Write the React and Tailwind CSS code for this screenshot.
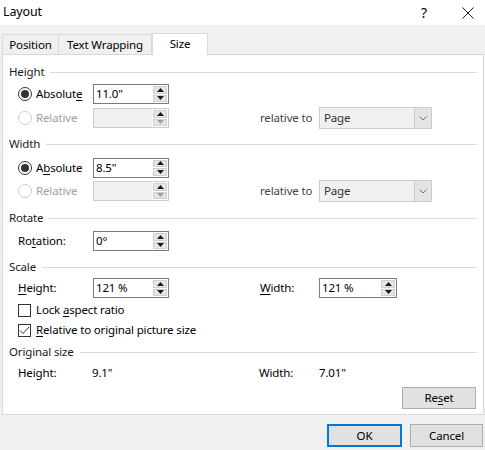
const font = { fontFamily: '"Noto Sans", "Open Sans", sans-serif', letterSpacing: '-0.15px' }

function U({ children }) {
  return <span className="underline underline-offset-2">{children}</span>
}

function Arrow({ up, color }) {
  return (
    <svg width="7" height="4" viewBox="0 0 7 4">
      {up ? <path d="M0 4 L3.5 0 L7 4 Z" fill={color} /> : <path d="M0 0 L3.5 4 L7 0 Z" fill={color} />}
    </svg>
  )
}

function Spin({ value, disabled, w = 'w-[76px]' }) {
  return (
    <div className={`flex h-[20px] ${w} border ${disabled ? 'border-[#cccccc]' : 'border-[#7a7a7a]'}`}>
      <div className={`flex-1 flex items-center pl-[2px] ${disabled ? 'bg-[#f0f0f0]' : 'bg-white'}`}>{value}</div>
      <div className="w-[16px] flex flex-col bg-white p-px gap-px">
        <div className="flex-1 flex items-center justify-center bg-[#e5e5e5] border border-[#d0d0d0]"><Arrow up color="#1a1a1a" /></div>
        <div className="flex-1 flex items-center justify-center bg-[#e5e5e5] border border-[#d0d0d0]"><Arrow color={disabled ? '#a0a0a0' : '#1a1a1a'} /></div>
      </div>
    </div>
  )
}

function Drop() {
  return (
    <div className="flex h-[22px] w-[113px] border border-[#cccccc] bg-[#f0f0f0]">
      <div className="flex-1 flex items-center pl-[4px] text-[#333]">Page</div>
      <div className="w-[17px] flex items-center justify-center bg-[#e4e4e4] border-l border-[#cccccc]">
        <svg width="8" height="5" viewBox="0 0 8 5"><path d="M0.5 0.5 L4 4 L7.5 0.5" fill="none" stroke="#707070" strokeWidth="1" /></svg>
      </div>
    </div>
  )
}

function Radio({ on, disabled }) {
  return (
    <div className={`w-[14px] h-[14px] rounded-full border flex items-center justify-center bg-white ${disabled ? 'border-[#cccccc]' : 'border-[#333]'}`}>
      {on && <div className="w-[8px] h-[8px] rounded-full bg-[#333]" />}
    </div>
  )
}

function Check({ on }) {
  return (
    <div className="w-[13px] h-[13px] border border-[#333] bg-white flex items-center justify-center">
      {on && <svg width="11" height="9" viewBox="0 0 11 9"><path d="M1 4.5 L4 7.5 L10 1" fill="none" stroke="#333" strokeWidth="1" /></svg>}
    </div>
  )
}

function Header({ children, className = '' }) {
  return (
    <div className={`flex items-center h-[20px] ${className}`}>
      <span className="text-[#1a1a1a]">{children}</span>
      <div className="flex-1 ml-[6px] border-t border-[#dcdcdc]" />
    </div>
  )
}

function RadioRow({ on, disabled, label, value, rel, h = 'h-[24px]' }) {
  return (
    <div className={`flex items-center ${h}`}>
      <div className="w-[9px]" />
      <Radio on={on} disabled={disabled} />
      <span className={`ml-[4px] w-[57px] ${disabled ? 'text-[#a0a0a0]' : ''}`}>{label}</span>
      <Spin value={value} disabled={disabled} />
      {rel && (
        <>
          <span className="ml-[91px] w-[59px] text-[#444]">relative to</span>
          <Drop />
        </>
      )}
    </div>
  )
}

export default function App() {
  return (
    <div className="w-[485px] h-[450px] bg-[#f0f0f0] text-[11.5px] text-black flex flex-col" style={font}>
      <div className="h-[25px] bg-white flex items-center pl-[3px]">
        <span className="text-[12.5px]">Layout</span>
        <div className="flex-1" />
        <span className="text-[14px] mr-[35px]">?</span>
        <svg width="12" height="12" viewBox="0 0 12 12" className="mr-[11px]"><path d="M0.5 0.5 L11.5 11.5 M11.5 0.5 L0.5 11.5" stroke="#1a1a1a" strokeWidth="1" /></svg>
      </div>
      <div className="flex items-end h-[29px] pl-[2px]">
        <div className="h-[20px] w-[57px] flex items-center justify-center border border-b-0 border-[#d9d9d9] bg-[#f0f0f0]">Position</div>
        <div className="h-[20px] w-[93px] flex items-center justify-center border border-l-0 border-b-0 border-[#d9d9d9] bg-[#f0f0f0]">Text Wrapping</div>
        <div className="h-[22px] w-[56px] flex items-center justify-center border border-b-0 border-[#d9d9d9] bg-white -mb-px relative z-10 pb-[2px]">Size</div>
      </div>
      <div className="mx-[2px] w-[482px] h-[361px] bg-white border border-[#d9d9d9] pl-[6px] pr-[6px] pt-[7px] flex flex-col">
        <Header>Height</Header>
        <RadioRow on label={<>Absolut<U>e</U></>} value={'11.0"'} />
        <RadioRow disabled label="Relative" value="" rel />
        <Header className="mt-[4px]">Width</Header>
        <RadioRow on label={<>A<U>b</U>solute</>} value={'8.5"'} h="h-[23px] mt-[2px]" />
        <RadioRow disabled label="Relative" value="" rel />
        <Header className="mt-[5px]">Rotate</Header>
        <div className="flex items-center h-[24px] mt-[1px]">
          <span className="ml-[9px] w-[75px]">Ro<U>t</U>ation:</span>
          <Spin value="0°" />
        </div>
        <Header className="mt-[4px]">Scale</Header>
        <div className="flex items-center h-[22px]">
          <span className="ml-[9px] w-[75px]"><U>H</U>eight:</span>
          <Spin value="121 %" />
          <span className="ml-[91px] w-[59px]"><U>W</U>idth:</span>
          <Spin value="121 %" w="w-[78px]" />
        </div>
        <div className="flex items-center h-[22px]">
          <div className="w-[9px]" />
          <Check />
          <span className="ml-[5px]">Lock <U>a</U>spect ratio</span>
        </div>
        <div className="flex items-center h-[18px]">
          <div className="w-[9px]" />
          <Check on />
          <span className="ml-[5px]"><U>R</U>elative to original picture size</span>
        </div>
        <Header className="mt-[3px]">Original size</Header>
        <div className="flex items-center h-[22px]">
          <span className="ml-[9px] w-[74px]">Height:</span>
          <span className="w-[167px]">9.1"</span>
          <span className="w-[60px]">Width:</span>
          <span>7.01"</span>
        </div>
        <div className="flex justify-end mt-[3px] pr-[1px]">
          <div className="w-[74px] h-[22px] bg-[#e1e1e1] border border-[#adadad] flex items-center justify-center">Re<U>s</U>et</div>
        </div>
      </div>
      <div className="flex justify-end gap-[8px] pr-[2px] mt-[9px]">
        <div className="w-[75px] h-[23px] bg-[#e1e1e1] border-2 border-[#0078d7] flex items-center justify-center">OK</div>
        <div className="w-[73px] h-[23px] bg-[#e1e1e1] border border-[#adadad] flex items-center justify-center">Cancel</div>
      </div>
    </div>
  )
}
